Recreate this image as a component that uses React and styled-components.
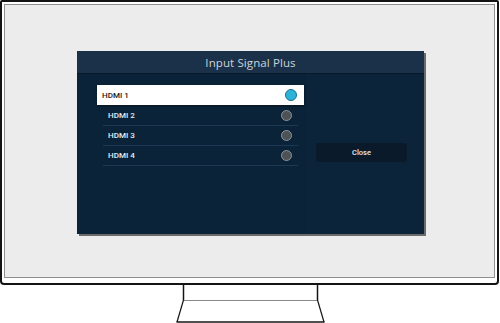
import React from "react";
import styled, { createGlobalStyle } from "styled-components";

const GlobalStyle = createGlobalStyle`
  html, body {
    margin: 0;
    padding: 0;
    background: #fff;
  }
  body {
    font-family: "Open Sans", "Noto Sans", sans-serif;
  }
`;

const Page = styled.div`
  width: 500px;
  height: 323px;
  overflow: hidden;
  background: #fff;
`;

const Frame = styled.div`
  width: 499px;
  height: 285px;
  box-sizing: border-box;
  border: 2px solid #141414;
  border-radius: 2px 2px 4px 4px;
  padding: 2px 2px 5px 2px;
  background: #fff;
`;

const Screen = styled.div`
  height: 100%;
  box-sizing: border-box;
  border: 1px solid #8f8f8f;
  background: #ececec;
  padding: 46px 0 0 72px;
`;

const Dialog = styled.div`
  width: 347px;
  height: 183px;
  display: flex;
  flex-direction: column;
  background: #0c243a;
  box-shadow: 2px 2px 0 #6b6b6b;
`;

const Header = styled.div`
  height: 22px;
  flex: none;
  display: flex;
  align-items: center;
  justify-content: center;
  background: #1b3149;
  border-bottom: 1px solid #0a192a;
  color: #cdd3d9;
  font-size: 11.5px;
  letter-spacing: 0.1px;
`;

const Body = styled.div`
  flex: 1;
  display: flex;
`;

const ListPane = styled.div`
  width: 229px;
  box-sizing: border-box;
  padding: 11px 0 0 20px;
  background: #0b2338;
  border-right: 1px solid #0b2034;
`;

const ActionPane = styled.div`
  flex: 1;
  display: flex;
  align-items: flex-start;
  padding: 69px 0 0 10px;
`;

const Row = styled.div`
  display: flex;
  align-items: center;
  justify-content: space-between;
  box-sizing: border-box;
  height: 20px;
  width: ${(p) => (p.$selected ? "207px" : "195px")};
  margin-left: ${(p) => (p.$selected ? "0" : "6px")};
  padding: ${(p) => (p.$selected ? "0 7px 0 5px" : "0 6px 0 5px")};
  background: ${(p) => (p.$selected ? "#fff" : "transparent")};
  border-bottom: ${(p) => (p.$selected ? "none" : "1px solid #1d3852")};
  box-shadow: ${(p) => (p.$selected ? "0 1px 2px rgba(0,0,0,0.5)" : "none")};
  margin-bottom: ${(p) => (p.$selected ? "1px" : "0")};
`;

const Label = styled.span`
  font-family: Roboto, "Open Sans", sans-serif;
  font-size: 8px;
  font-weight: 500;
  color: ${(p) => (p.$selected ? "#1a1a1a" : "#e8ecef")};
`;

const Radio = styled.span`
  display: block;
  box-sizing: border-box;
  width: ${(p) => (p.$on ? "12px" : "11px")};
  height: ${(p) => (p.$on ? "12px" : "11px")};
  border-radius: 50%;
  background: ${(p) => (p.$on ? "#2bb3d8" : "#4d5257")};
  border: ${(p) =>
    p.$on ? "1px solid #1a6f8a" : "1.5px solid #8d9399"};
`;

const CloseButton = styled.button`
  width: 91px;
  height: 19px;
  border: none;
  border-radius: 3px;
  background: #0a1a2a;
  color: #e4e8ec;
  font-family: Roboto, "Open Sans", sans-serif;
  font-size: 7.5px;
  font-weight: 500;
  padding: 0;
`;

const Stand = styled.svg`
  display: block;
`;

const inputs = ["HDMI 1", "HDMI 2", "HDMI 3", "HDMI 4"];

export default function App() {
  return (
    <Page>
      <GlobalStyle />
      <Frame>
        <Screen>
          <Dialog>
            <Header>Input Signal Plus</Header>
            <Body>
              <ListPane>
                {inputs.map((name, i) => (
                  <Row key={name} $selected={i === 0}>
                    <Label $selected={i === 0}>{name}</Label>
                    <Radio $on={i === 0} />
                  </Row>
                ))}
              </ListPane>
              <ActionPane>
                <CloseButton>Close</CloseButton>
              </ActionPane>
            </Body>
          </Dialog>
        </Screen>
      </Frame>
      <Stand width="500" height="38" viewBox="0 0 500 38">
        <line x1="183.5" y1="0" x2="183.5" y2="15" stroke="#141414" strokeWidth="1.5" />
        <line x1="317.5" y1="0" x2="317.5" y2="15" stroke="#141414" strokeWidth="1.5" />
        <line x1="183" y1="15.5" x2="318" y2="15.5" stroke="#8a8a8a" strokeWidth="1" />
        <line x1="183.5" y1="15" x2="177" y2="37" stroke="#141414" strokeWidth="1.2" />
        <line x1="317.5" y1="15" x2="324" y2="37" stroke="#141414" strokeWidth="1.2" />
        <line x1="176.5" y1="37" x2="324.5" y2="37" stroke="#141414" strokeWidth="1.5" />
      </Stand>
    </Page>
  );
}
